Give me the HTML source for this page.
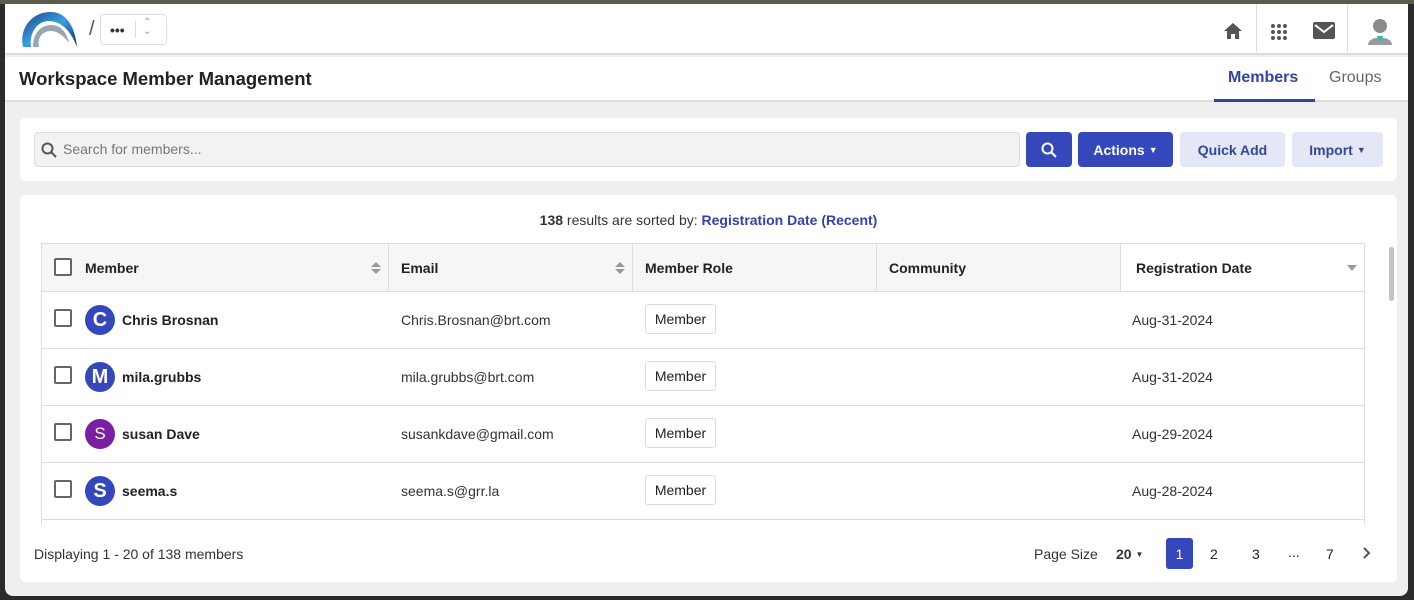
<!DOCTYPE html>
<html><head><meta charset="utf-8"><style>
*{box-sizing:border-box;margin:0;padding:0}
body{width:1414px;height:600px;background:#2b2b2b;font-family:"Liberation Sans",Arial,sans-serif;color:#222;position:relative;overflow:hidden}
.a{position:absolute}
.page{position:absolute;left:5px;top:4px;width:1403px;height:592px;background:#efefef;border-radius:0 0 8px 8px;overflow:hidden}
.top{position:absolute;left:0;top:0;width:1414px;height:4px;background:#5e5a4e}
.hdr{left:0;top:0;width:1403px;height:51px;background:#fff;border-bottom:2px solid #ddd}
.tb{left:0;top:53px;width:1403px;height:45px;background:#fff;border-bottom:2px solid #ddd}
.card{background:#fff;border-radius:5px}
.btn{border-radius:4px;font-weight:bold;font-size:14px;display:flex;align-items:center;justify-content:center}
.th{top:0;height:48px;background:#f5f6f8;border-right:1px solid #ddd;font-weight:bold;font-size:14px;display:flex;align-items:center}
.row{left:0;width:1322px;height:57px;border-bottom:1px solid #ddd}
.cb{position:absolute;width:18px;height:18px;border:2px solid #666;border-radius:2px;background:#fff}
.av{position:absolute;left:43px;width:30px;height:30px;border-radius:50%;color:#fff;font-size:20px;font-weight:bold;display:flex;align-items:center;justify-content:center}
.nm{position:absolute;left:80px;font-weight:bold;font-size:14px}
.em{position:absolute;left:359px;font-size:14px;color:#333}
.role{position:absolute;left:603px;width:71px;height:30px;border:1px solid #ddd;border-radius:3px;font-size:14px;display:flex;align-items:center;justify-content:center}
.dt{position:absolute;left:1090px;font-size:14px;color:#333}
.sort{position:absolute;width:0;height:0;border-left:5px solid transparent;border-right:5px solid transparent}
</style></head><body>
<div class="top"></div>
<div class="page">
 <div class="a hdr">
  <svg class="a" style="left:14px;top:3px" width="60" height="44" viewBox="0 0 60 44">
   <defs><linearGradient id="g" x1="0" y1="0" x2="1" y2="1"><stop offset="0" stop-color="#1a3f8a"/><stop offset=".5" stop-color="#3aa0e0"/><stop offset="1" stop-color="#0d2a6a"/></linearGradient></defs>
   <path d="M4 40 C0 22 12 6 30 5 C46 4 56 18 58 40 C52 24 42 14 30 14 C18 14 10 26 12 40 Z" fill="url(#g)"/>
   <path d="M14 40 C14 26 22 18 32 18 C42 18 48 26 50 36 C44 28 38 24 32 24 C24 24 18 30 20 40Z" fill="#9aa6b6"/>
  </svg>
  <div class="a" style="left:84px;top:14px;font-size:20px;color:#555">/</div>
  <div class="a" style="left:95px;top:10px;width:67px;height:31px;border:1px solid #ddd;border-radius:4px"></div>
  <div class="a" style="left:105px;top:18px;font-size:14px;font-weight:bold;color:#333">•••</div>
  <div class="a" style="left:130px;top:17px;width:1px;height:17px;background:#ddd"></div>
  <div class="a" style="left:138px;top:14px;font-size:10px;color:#999;line-height:9px">⌃<br>⌄</div>
  <svg class="a" style="left:1218px;top:18px" width="20" height="18" viewBox="0 0 20 18"><path d="M10 1 L19 9 H16 V17 H12 V12 H8 V17 H4 V9 H1Z" fill="#555"/></svg>
  <div class="a" style="left:1251px;top:0;width:1px;height:51px;background:#ddd"></div>
  <svg class="a" style="left:1265px;top:19px" width="18" height="18"><g fill="#555"><circle cx="3" cy="3" r="2"/><circle cx="9" cy="3" r="2"/><circle cx="15" cy="3" r="2"/><circle cx="3" cy="9" r="2"/><circle cx="9" cy="9" r="2"/><circle cx="15" cy="9" r="2"/><circle cx="3" cy="15" r="2"/><circle cx="9" cy="15" r="2"/><circle cx="15" cy="15" r="2"/></g></svg>
  <svg class="a" style="left:1308px;top:18px" width="22" height="18"><rect x="0" y="0" width="22" height="17" rx="2" fill="#555"/><path d="M2 3 L11 10 L20 3" stroke="#fff" stroke-width="2" fill="none"/></svg>
  <div class="a" style="left:1342px;top:0;width:1px;height:51px;background:#ddd"></div>
  <svg class="a" style="left:1362px;top:13px" width="26" height="28"><circle cx="13" cy="9" r="7" fill="#8a8a8a"/><path d="M1 28 C1 18 25 18 25 28Z" fill="#9a9a9a"/><path d="M10 19 L13 25 L16 19Z" fill="#2bb"/></svg>
 </div>
 <div class="a tb">
  <div class="a" style="left:14px;top:11px;font-size:18.5px;font-weight:bold;color:#222">Workspace Member Management</div>
  <div class="a" style="left:1223px;top:12px;font-size:16px;font-weight:bold;color:#3143a8">Members</div>
  <div class="a" style="left:1209px;top:42px;width:101px;height:3px;background:#3143a8"></div>
  <div class="a" style="left:1324px;top:12px;font-size:16px;color:#666">Groups</div>
 </div>
 <div class="a card" style="left:15px;top:114px;width:1377px;height:63px">
  <div class="a" style="left:14px;top:14px;width:986px;height:35px;background:#f1f2f4;border:1px solid #ddd;border-radius:4px"></div>
  <svg class="a" style="left:21px;top:24px" width="16" height="16"><circle cx="6.5" cy="6.5" r="5" stroke="#555" stroke-width="2" fill="none"/><path d="M10 10 L15 15" stroke="#555" stroke-width="2"/></svg>
  <div class="a" style="left:43px;top:23px;font-size:14px;color:#777">Search for members...</div>
  <div class="a btn" style="left:1006px;top:14px;width:46px;height:35px;background:#3447bb"><svg width="16" height="16"><circle cx="6.5" cy="6.5" r="5" stroke="#fff" stroke-width="2" fill="none"/><path d="M10 10 L15 15" stroke="#fff" stroke-width="2"/></svg></div>
  <div class="a btn" style="left:1058px;top:14px;width:95px;height:35px;background:#3447bb;color:#fff">Actions <span style="font-size:9px;margin-left:4px">▼</span></div>
  <div class="a btn" style="left:1160px;top:14px;width:105px;height:35px;background:#e3e7f6;color:#34479a">Quick Add</div>
  <div class="a btn" style="left:1272px;top:14px;width:91px;height:35px;background:#e3e7f6;color:#34479a">Import <span style="font-size:9px;margin-left:4px">▼</span></div>
 </div>
 <div class="a card" style="left:15px;top:191px;width:1377px;height:387px">
  <div class="a" style="left:0;top:17px;width:1377px;text-align:center;font-size:14px;color:#333"><b>138</b> results are sorted by: <b style="color:#3143a8">Registration Date (Recent)</b></div>
  <div class="a" style="left:21px;top:48px;width:1324px;height:282px;border:1px solid #ddd;border-bottom:none;overflow:hidden">
   <div class="a th" style="left:0;width:347px"><div class="cb" style="left:12px;top:14px"></div><span style="margin-left:43px">Member</span>
    <div class="sort" style="left:329px;top:18px;border-bottom:5px solid #999"></div><div class="sort" style="left:329px;top:25px;border-top:5px solid #999"></div></div>
   <div class="a th" style="left:347px;width:244px"><span style="margin-left:12px">Email</span>
    <div class="sort" style="left:226px;top:18px;border-bottom:5px solid #999"></div><div class="sort" style="left:226px;top:25px;border-top:5px solid #999"></div></div>
   <div class="a th" style="left:591px;width:244px"><span style="margin-left:12px">Member Role</span></div>
   <div class="a th" style="left:835px;width:244px"><span style="margin-left:12px">Community</span></div>
   <div class="a th" style="left:1079px;width:243px;background:#fff;border-right:none"><span style="margin-left:15px">Registration Date</span>
    <div class="sort" style="left:226px;top:21px;border-top:6px solid #999"></div></div>
   <div class="a" style="left:0;top:47px;width:1322px;height:1px;background:#ddd"></div>
   <div class="a row" style="top:48px"><div class="cb" style="left:12px;top:17px"></div><div class="av" style="top:13px;background:#3447bb">C</div><div class="nm" style="top:20px">Chris Brosnan</div><div class="em" style="top:20px">Chris.Brosnan@brt.com</div><div class="role" style="top:12px">Member</div><div class="dt" style="top:20px">Aug-31-2024</div></div>
   <div class="a row" style="top:105px"><div class="cb" style="left:12px;top:17px"></div><div class="av" style="top:13px;background:#3447bb">M</div><div class="nm" style="top:20px">mila.grubbs</div><div class="em" style="top:20px">mila.grubbs@brt.com</div><div class="role" style="top:12px">Member</div><div class="dt" style="top:20px">Aug-31-2024</div></div>
   <div class="a row" style="top:162px"><div class="cb" style="left:12px;top:17px"></div><div class="av" style="top:13px;background:#7b1fa2;font-weight:normal;font-size:17px">S</div><div class="nm" style="top:20px">susan Dave</div><div class="em" style="top:20px">susankdave@gmail.com</div><div class="role" style="top:12px">Member</div><div class="dt" style="top:20px">Aug-29-2024</div></div>
   <div class="a row" style="top:219px"><div class="cb" style="left:12px;top:17px"></div><div class="av" style="top:13px;background:#3447bb">S</div><div class="nm" style="top:20px">seema.s</div><div class="em" style="top:20px">seema.s@grr.la</div><div class="role" style="top:12px">Member</div><div class="dt" style="top:20px">Aug-28-2024</div></div>
  </div>
  <div class="a" style="left:1369px;top:52px;width:5px;height:54px;background:#c4c4c4;border-radius:3px"></div>
  <div class="a" style="left:14px;top:351px;font-size:14px;color:#333">Displaying 1 - 20 of 138 members</div>
  <div class="a" style="left:1014px;top:351px;font-size:14px;color:#333">Page Size</div>
  <div class="a" style="left:1096px;top:351px;font-size:14px;font-weight:bold;color:#333">20 <span style="font-size:8px;vertical-align:2px">▼</span></div>
  <div class="a" style="left:1146px;top:343px;width:27px;height:31px;background:#3447bb;border-radius:3px;color:#fff;font-size:14px;display:flex;align-items:center;justify-content:center">1</div>
  <div class="a" style="left:1190px;top:351px;font-size:14px">2</div>
  <div class="a" style="left:1232px;top:351px;font-size:14px">3</div>
  <div class="a" style="left:1268px;top:349px;font-size:14px">...</div>
  <div class="a" style="left:1306px;top:351px;font-size:14px">7</div>
  <svg class="a" style="left:1343px;top:352px" width="8" height="12"><path d="M1 1 L6 6 L1 11" stroke="#555" stroke-width="2" fill="none"/></svg>
 </div>
</div>
</body></html>
